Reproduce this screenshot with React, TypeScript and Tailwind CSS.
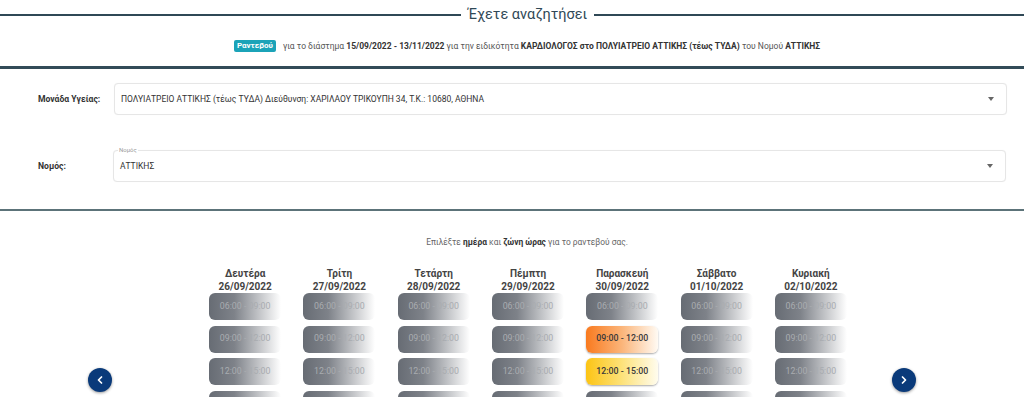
import { ChevronLeft, ChevronRight } from 'lucide-react';

const days = [
    { name: 'Δευτέρα', date: '26/09/2022' },
    { name: 'Τρίτη', date: '27/09/2022' },
    { name: 'Τετάρτη', date: '28/09/2022' },
    { name: 'Πέμπτη', date: '29/09/2022' },
    { name: 'Παρασκευή', date: '30/09/2022' },
    { name: 'Σάββατο', date: '01/10/2022' },
    { name: 'Κυριακή', date: '02/10/2022' },
];

const slots = ['06:00 - 09:00', '09:00 - 12:00', '12:00 - 15:00', '15:00 - 18:00'];

function Slot({ label, tone }: { label: string; tone: 'off' | 'orange' | 'yellow' }) {
    const toneClass =
        tone === 'orange'
            ? 'bg-linear-to-r/srgb from-[#f97a1f] via-[#fbb57a] to-[#fffaf3] text-[#3a3a3a] font-medium shadow-[0_1px_2px_rgba(0,0,0,0.35)]'
            : tone === 'yellow'
              ? 'bg-linear-to-r/srgb from-[#fcc414] via-[#fde27a] to-[#fffcee] text-[#3a3a3a] font-medium shadow-[0_1px_2px_rgba(0,0,0,0.35)]'
              : 'bg-linear-to-r/srgb from-[#676c74] via-[#7e8289] via-35% to-white text-[#a9acb0]';
    return (
        <div className={`w-[72px] h-[27px] rounded-[6px] flex items-center justify-center text-[8.8px] ${toneClass}`}>
            {label}
        </div>
    );
}

function SelectBox({ value, legend }: { value: string; legend?: string }) {
    return (
        <div className="relative flex-1 h-[32px] rounded-[4px] border border-[#e6e6e6] bg-white shadow-[0_0_1px_rgba(0,0,0,0.06)] flex items-center pl-[6px] pr-[12px]">
            {legend && (
                <span className="absolute -top-[5px] left-[4px] bg-white px-[1px] text-[6px] leading-[8px] text-[#9a9a9a]">
                    {legend}
                </span>
            )}
            <span className="flex-1 text-[8.5px] text-[#333]">{value}</span>
            <span className="w-0 h-0 border-l-[3.5px] border-r-[3.5px] border-t-[4px] border-l-transparent border-r-transparent border-t-[#666]" />
        </div>
    );
}

export default function App() {
    return (
        <div className="w-[1024px] h-[397px] overflow-hidden bg-white font-['Roboto',sans-serif] text-[#333]">
            {/* Τίτλος */}
            <div className="h-[30px] flex items-center">
                <div className="w-[461px] h-[2px] bg-[#2f4856]" />
                <h1 className="px-[7px] text-[14.5px] text-[#2f4856] leading-none">Έχετε αναζητήσει</h1>
                <div className="flex-1 h-[2px] bg-[#2f4856]" />
            </div>

            {/* Περίληψη αναζήτησης */}
            <div className="h-[36px] pb-[4px] pl-[30px] flex items-center justify-center text-[8.5px] text-[#555]">
                <span className="mr-[7px] rounded-[2px] bg-[#1ba3b8] px-[3px] h-[12px] leading-[12px] text-[8px] font-bold text-white">
                    Ραντεβού
                </span>
                για το διάστημα&nbsp;<b className="text-[#333]">15/09/2022 - 13/11/2022</b>&nbsp;για την ειδικότητα&nbsp;
                <b className="text-[#333]">ΚΑΡΔΙΟΛΟΓΟΣ στο ΠΟΛΥΙΑΤΡΕΙΟ ΑΤΤΙΚΗΣ (τέως ΤΥΔΑ)</b>&nbsp;του Νομού&nbsp;
                <b className="text-[#333]">ΑΤΤΙΚΗΣ</b>
            </div>

            <div className="h-[3px] bg-[#324b58]" />

            {/* Φόρμα */}
            <div className="pl-[38px] pr-[17px] pt-[14px]">
                <div className="flex items-center">
                    <label className="w-[76px] text-[8.6px] font-bold text-[#333]">Μονάδα Υγείας:</label>
                    <SelectBox value="ΠΟΛΥΙΑΤΡΕΙΟ ΑΤΤΙΚΗΣ (τέως ΤΥΔΑ) Διεύθυνση: ΧΑΡΙΛΑΟΥ ΤΡΙΚΟΥΠΗ 34, Τ.Κ.: 10680, ΑΘΗΝΑ" />
                </div>
                <div className="flex items-center mt-[35px] pr-[1px]">
                    <label className="w-[75px] text-[8.6px] font-bold text-[#333]">Νομός:</label>
                    <SelectBox value="ΑΤΤΙΚΗΣ" legend="Νομός" />
                </div>
            </div>

            <div className="mt-[27px] h-[2px] bg-[#5c7379]" />

            {/* Επιλογή ημέρας */}
            <p className="mt-[25px] pl-[30px] text-center text-[8.4px] text-[#666] leading-[12px]">
                Επιλέξτε <b className="text-[#333]">ημέρα</b> και <b className="text-[#333]">ζώνη ώρας</b> για το ραντεβού σας.
            </p>

            <div className="mt-[19px] flex items-start pl-[88px]">
                <button className="mt-[101px] w-[24px] h-[24px] rounded-full bg-[#0a3a7a] text-white flex items-center justify-center shadow-[0_1px_3px_rgba(0,0,0,0.4)]">
                    <ChevronLeft className="w-[12px] h-[12px]" strokeWidth={3.5} />
                </button>
                <div className="ml-[86px] w-[660px] grid grid-cols-7">
                    {days.map((d, di) => (
                        <div key={d.date} className="flex flex-col items-center">
                            <div className="text-center text-[10px] font-bold text-[#444] leading-[13px]">
                                <div>{d.name}</div>
                                <div>{d.date}</div>
                            </div>
                            <div className="flex flex-col gap-[5.5px]">
                                {slots.map((s, si) => (
                                    <Slot
                                        key={s}
                                        label={s}
                                        tone={di === 4 && si === 1 ? 'orange' : di === 4 && si === 2 ? 'yellow' : 'off'}
                                    />
                                ))}
                            </div>
                        </div>
                    ))}
                </div>
                <button className="ml-[34px] mt-[101px] w-[24px] h-[24px] rounded-full bg-[#0a3a7a] text-white flex items-center justify-center shadow-[0_1px_3px_rgba(0,0,0,0.4)]">
                    <ChevronRight className="w-[12px] h-[12px]" strokeWidth={3.5} />
                </button>
            </div>
        </div>
    );
}
